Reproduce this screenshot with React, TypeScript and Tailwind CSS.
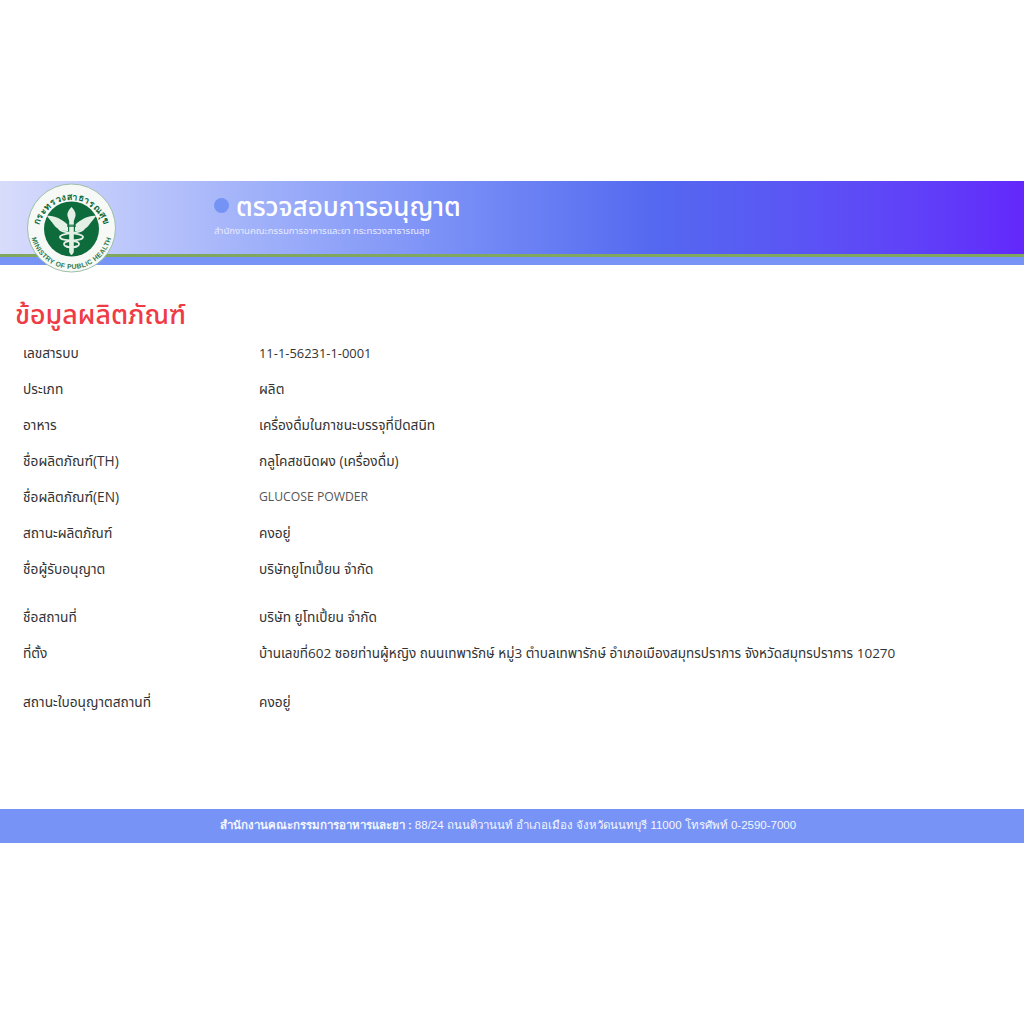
const rows: { label: string; value: string; h: string; vc?: string }[] = [
  { label: "เลขสารบบ", value: "11-1-56231-1-0001", h: "h-[36px]", vc: "text-[12.9px] pt-[1px]" },
  { label: "ประเภท", value: "ผลิต", h: "h-[36px]" },
  { label: "อาหาร", value: "เครื่องดื่มในภาชนะบรรจุที่ปิดสนิท", h: "h-[36px]" },
  { label: "ชื่อผลิตภัณฑ์(TH)", value: "กลูโคสชนิดผง (เครื่องดื่ม)", h: "h-[36px]" },
  { label: "ชื่อผลิตภัณฑ์(EN)", value: "GLUCOSE POWDER", h: "h-[36px]", vc: "text-[12.2px] text-[#555] pt-[1px]" },
  { label: "สถานะผลิตภัณฑ์", value: "คงอยู่", h: "h-[36px]" },
  { label: "ชื่อผู้รับอนุญาต", value: "บริษัทยูโทเปี้ยน จำกัด", h: "h-[48px] pb-[12px]" },
  { label: "ชื่อสถานที่", value: "บริษัท ยูโทเปี้ยน จำกัด", h: "h-[36px]" },
  { label: "ที่ตั้ง", value: "บ้านเลขที่602 ซอยท่านผู้หญิง ถนนเทพารักษ์ หมู่3 ตำบลเทพารักษ์ อำเภอเมืองสมุทรปราการ จังหวัดสมุทรปราการ 10270", h: "h-[49px] pb-[13px]", vc: "text-[13.5px]" },
  { label: "สถานะใบอนุญาตสถานที่", value: "คงอยู่", h: "h-[36px]" },
];

function Logo() {
  return (
    <svg viewBox="0 0 92 92" className="w-[92px] h-[92px]">
      <defs>
        <path id="top" d="M 12.5 50 A 33 33 0 0 1 78.500 50" />
        <path id="bot" d="M 4.500 45 A 41 41 0 0 0 86.500 45" />
      </defs>
      <circle cx="45.500" cy="45" r="44" fill="#f6f9f6" stroke="#9dbfa8" strokeWidth="1" />
      <circle cx="45.500" cy="46" r="27.500" fill="#0d6b3c" />
      <text fontSize="9" fontWeight="700" letterSpacing="0.6" fill="#0d6b3c" fontFamily="'Noto Sans','Open Sans',sans-serif">
        <textPath href="#top" startOffset="50%" textAnchor="middle">กระทรวงสาธารณสุข</textPath>
      </text>
      <text fontSize="6.800" fontWeight="700" letterSpacing="0.35" fill="#2f7a50" fontFamily="'Liberation Sans',sans-serif">
        <textPath href="#bot" startOffset="50%" textAnchor="middle">MINISTRY OF PUBLIC HEALTH</textPath>
      </text>
      <g fill="#e4efe6">
        <path d="M45.500 24 C48 27 50 29 49.500 33 L47.800 38 L47.800 69 C47 71 46 72 45.500 72 C45 72 44 71 43.200 69 L43.200 38 L41.500 33 C41 29 43 27 45.500 24Z" />
        <path d="M21 33 C27 32 36 36 42 42 L42 48 C36 48 31 46 28 42 C26 39 23 36 21 33Z" />
        <path d="M70 33 C64 32 55 36 49 42 L49 48 C55 48 60 46 63 42 C65 39 68 36 70 33Z" />
      </g>
      <g fill="none" stroke="#e4efe6" strokeWidth="1.800">
        <path d="M33 44 C31 51 57 49 57 54 C57 59 38 56 38 61 C38 65 49 65 51 63" />
        <path d="M58 44 C60 51 34 49 34 54 C34 59 53 56 53 61 C53 65 42 65 40 63" />
      </g>
      <path d="M41 41.500 L50 41.500 L50 44 L41 44Z" fill="#0d6b3c" opacity="0.7" />
    </svg>
  );
}

export default function App() {
  return (
    <div className="min-h-[1024px] bg-white pt-[181px] font-['Open_Sans','Noto_Sans','Noto_Sans_Thai',sans-serif] text-[13.7px] text-[#333]">
      <header className="relative">
        <div className="h-[73px] bg-gradient-to-r from-[#d8dcfb] via-[#5468f0] via-[64%] to-[#6327fb] pl-[214px] flex flex-col">
          <div className="flex items-center h-[50px] pb-[1px] gap-[7px]">
            <span className="w-[15px] h-[15px] rounded-full bg-[#7593f5]" />
            <span className="text-[26px] leading-none text-white font-medium">ตรวจสอบการอนุญาต</span>
          </div>
          <div className="text-[9.6px] leading-none text-[#e8ebff] mt-[-5px]">สำนักงานคณะกรรมการอาหารและยา กระทรวงสาธารณสุข</div>
        </div>
        <div className="h-[3px] bg-[#7fa75e]" />
        <div className="h-[8px] bg-[#7693f5]" />
        <div className="absolute left-[26px] top-[2px]"><Logo /></div>
      </header>
      <main className="pt-[31px] pl-[15px] h-[544px]">
        <h1 className="text-[26.800px] leading-[36px] font-medium text-[#ef3b45] mb-[3px]">ข้อมูลผลิตภัณฑ์</h1>
        <div className="pl-[8px]">
          {rows.map((r) => (
            <div key={r.label} className={`flex items-center ${r.h}`}>
              <div className="w-[236px] shrink-0">{r.label}</div>
              <div className={r.vc}>{r.value}</div>
            </div>
          ))}
        </div>
      </main>
      <footer className="h-[34px] bg-[#7693f5] flex items-center justify-center pr-[8px] text-[11.500px] font-['Liberation_Sans','Noto_Sans',sans-serif] text-[#f4f6ff]">
        <span className="font-bold">สำนักงานคณะกรรมการอาหารและยา :</span>
        <span className="ml-[3px]">88/24 ถนนติวานนท์ อำเภอเมือง จังหวัดนนทบุรี 11000 โทรศัพท์ 0-2590-7000</span>
      </footer>
    </div>
  );
}
